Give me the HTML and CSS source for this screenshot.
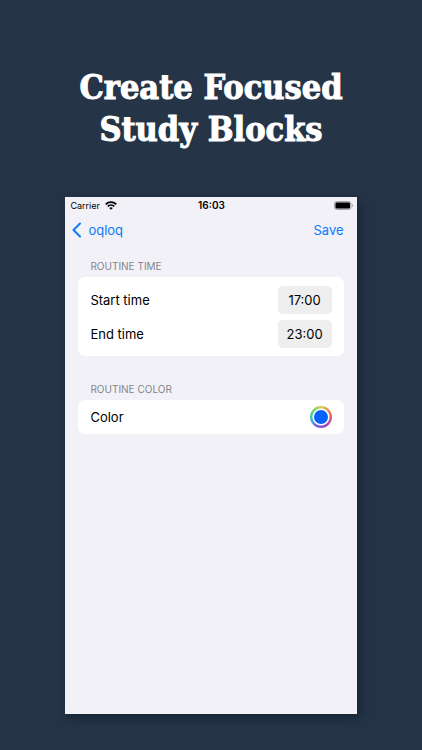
FILE: index.html
```html
<!DOCTYPE html>
<html lang="en">
<head>
    <meta charset="utf-8">
    <meta name="viewport" content="width=device-width, initial-scale=1">
    <title>oqloq</title>
    <link rel="stylesheet" href="styles.css">
</head>
<body>
    <h1>Create Focused Study Blocks</h1>
    <main class="phone">
        <div class="status-bar">
            <span class="carrier">
                Carrier
                <svg width="12" height="9" viewBox="0 0 12 9" fill="none" stroke="#000" stroke-width="1.7">
                    <path d="M0.7 3.3a7.5 7.5 0 0 1 10.6 0"/>
                    <path d="M2.7 5.4a4.7 4.7 0 0 1 6.6 0"/>
                    <path d="M6 8.8 4.2 7a2.6 2.6 0 0 1 3.6 0Z" fill="#000" stroke="none"/>
                </svg>
            </span>
            <span class="clock">16:03</span>
            <svg class="battery" width="19" height="9" viewBox="0 0 19 9">
                <rect x="0.5" y="0.5" width="16.5" height="8" rx="2.3" fill="#d5d5d9" stroke="#a5a5a9"/>
                <rect x="1.5" y="1.5" width="14.5" height="6" rx="1.3" fill="#000"/>
                <path d="M18 3v3q1-.4 1-1.500T18 3Z" fill="#a5a5a9"/>
            </svg>
        </div>
        <nav class="nav-bar">
            <a href="#" class="back">
                <svg width="9" height="16" viewBox="0 0 9 16" fill="none" stroke="#0a7aff" stroke-width="2" stroke-linecap="round" stroke-linejoin="round">
                    <path d="M8 1.500 1.500 8 8 14.500"/>
                </svg>
                oqloq
            </a>
            <button type="button" class="save">Save</button>
        </nav>
        <form class="routine">
            <section>
                <h2>ROUTINE TIME</h2>
                <div class="card">
                    <div class="row">
                        <label for="start">Start time</label>
                        <input type="text" id="start" class="time" value="17:00">
                    </div>
                    <div class="row">
                        <label for="end">End time</label>
                        <input type="text" id="end" class="time" value="23:00">
                    </div>
                </div>
            </section>
            <section>
                <h2>ROUTINE COLOR</h2>
                <div class="card color-card">
                    <div class="row">
                        <label for="color">Color</label>
                        <input type="color" id="color" class="color" value="#0563fb">
                    </div>
                </div>
            </section>
        </form>
    </main>
</body>
</html>
```
FILE: styles.css
```css
* {
    box-sizing: border-box;
}

body {
    margin: 0;
    min-height: 100vh;
    padding: 66px 0 36px;
    display: flex;
    flex-direction: column;
    align-items: center;
    background-color: #253447;
    color: #000;
    font-family: Inter, "Liberation Sans", sans-serif;
    font-size: 13px;
}

h1 {
    margin: 0 0 47px;
    max-width: 300px;
    color: #fff;
    font-family: "DejaVu Serif Condensed", "DejaVu Serif", serif;
    font-size: 34px;
    font-stretch: condensed;
    font-weight: bold;
    line-height: 42px;
    text-align: center;
    -webkit-text-stroke: 1px #fff;
}

.phone {
    width: 69%;
    flex: 1;
    background-color: #f2f1f7;
    box-shadow: 3px 4px 10px rgba(5, 20, 30, 0.5);
}

.status-bar {
    display: grid;
    grid-template-columns: 1fr auto 1fr;
    align-items: center;
    height: 16px;
    padding: 0 4px 0 5px;
    font-size: 9px;
}

.carrier {
    display: flex;
    align-items: center;
    gap: 5px;
}

.clock {
    font-size: 10px;
    font-weight: 600;
}

.battery {
    justify-self: end;
}

.nav-bar {
    display: flex;
    align-items: center;
    justify-content: space-between;
    height: 34px;
    padding: 0 13px 0 7px;
}

.back {
    display: flex;
    align-items: center;
    gap: 7px;
    color: #0a7aff;
    text-decoration: none;
}

.save {
    padding: 0;
    border: none;
    background: none;
    color: #0a7aff;
    font: inherit;
    cursor: pointer;
}

.routine {
    display: flex;
    flex-direction: column;
    gap: 26px;
    padding: 12px 13px 0;
}

h2 {
    margin: 0 12px 4px;
    color: #85858b;
    font-size: 10px;
    font-weight: 400;
    line-height: 14px;
}

.card {
    display: flex;
    flex-direction: column;
    gap: 6px;
    padding: 9px 12px 8px;
    border-radius: 7px;
    background-color: #fff;
}

.color-card {
    padding: 3px 12px;
}

.row {
    display: flex;
    align-items: center;
    justify-content: space-between;
    height: 28px;
}

.time {
    width: 54px;
    height: 28px;
    padding: 0;
    border: none;
    border-radius: 5px;
    background-color: #eeeeef;
    color: #000;
    font: inherit;
    text-align: center;
}

.color {
    appearance: none;
    width: 22px;
    height: 22px;
    padding: 4px;
    border: none;
    border-radius: 50%;
    background: radial-gradient(circle, #fff 8px, transparent 9px),
        conic-gradient(#d3d653, #ec8a4d 50deg, #e0517b 95deg, #a044c5 150deg, #7358df 200deg, #479fe2 240deg, #45d3a5 280deg, #7cd75f 320deg, #d3d653);
    cursor: pointer;
}

.color::-webkit-color-swatch-wrapper {
    padding: 0;
}

.color::-webkit-color-swatch {
    border: none;
    border-radius: 50%;
}
```
